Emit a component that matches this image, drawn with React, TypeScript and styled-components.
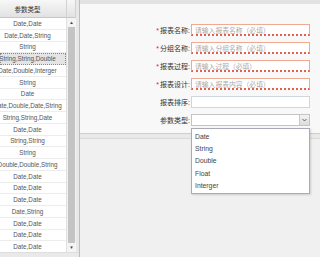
import React from 'react';
import styled, { createGlobalStyle } from 'styled-components';

const GlobalStyle = createGlobalStyle`
    html, body {
        margin: 0;
        padding: 0;
        background: #f0f0f0;
        font-family: "Liberation Sans", "Noto Sans CJK SC", sans-serif;
    }
`;

const Page = styled.div`
    display: flex;
    width: 320px;
    height: 257px;
    overflow: hidden;
    background: #f0f0f0;
`;

const Sidebar = styled.div`
    display: flex;
    flex-direction: column;
    width: 79px;
    flex: none;
    background: #fff;
    border-right: 1px solid #bdbdbd;
    box-shadow: inset -3px 0 0 #e8e8e8;
`;

const GridHeader = styled.div`
    display: flex;
    height: 18px;
    flex: none;
`;

const HeaderCell = styled.div<{ $w: number; $pad?: number }>`
    display: flex;
    align-items: center;
    justify-content: center;
    width: ${p => p.$w}px;
    padding-right: ${p => p.$pad || 0}px;
    flex: none;
    box-sizing: border-box;
    font-size: 6.5px;
    color: #333;
    background: linear-gradient(#f7f7f7, #e2e2e2);
    border-right: 1px solid #d2d2d2;
    border-bottom: 1px solid #c6c6c6;
`;

const GridBody = styled.div`
    display: flex;
    flex: 1;
    min-height: 0;
`;

const Rows = styled.div`
    width: 67px;
    flex: none;
    overflow: hidden;
    border-right: 1px solid #e0e0e0;
    box-sizing: border-box;
`;

const Row = styled.div<{ $selected?: boolean }>`
    display: flex;
    align-items: center;
    justify-content: center;
    height: 11.75px;
    padding-right: 11px;
    box-sizing: border-box;
    white-space: nowrap;
    font-size: 6.3px;
    color: #555;
    border-bottom: 1px solid #ececec;
    background: ${p => (p.$selected ? '#e4e4e4' : '#fff')};
    outline: ${p => (p.$selected ? '1px dotted #888' : 'none')};
    outline-offset: -1px;
`;

const Scrollbar = styled.div`
    display: flex;
    flex-direction: column;
    width: 9px;
    flex: none;
    background: #f2f2f2;
`;

const ScrollArrow = styled.div`
    display: flex;
    align-items: center;
    justify-content: center;
    height: 9px;
    flex: none;
    font-size: 4.5px;
    color: #444;
    background: #f4f4f4;
`;

const ScrollThumb = styled.div`
    flex: 1;
    margin: 0 1px;
    background: #c4c4c4;
`;

const HScroll = styled.div`
    height: 4px;
    flex: none;
    background: #e9e9e9;
    border-top: 1px solid #dedede;
`;

const Main = styled.div`
    display: flex;
    flex-direction: column;
    flex: 1;
    min-width: 0;
`;

const TopBar = styled.div`
    height: 4px;
    flex: none;
    background: #e2e2e2;
`;

const FormPanel = styled.div`
    display: grid;
    grid-template-columns: 1fr 119px;
    grid-auto-rows: 12px;
    row-gap: 6px;
    column-gap: 1px;
    align-items: center;
    padding: 20px 10px 0 0;
    height: 130px;
    flex: none;
    box-sizing: border-box;
    background: #f8f8f8;
    border-bottom: 1px solid #cfcfcf;
    position: relative;
    z-index: 1;
`;

const Toolbar = styled.div`
    height: 4px;
    flex: none;
    background: #e9e9e9;
    border-bottom: 1px solid #dadada;
`;

const Label = styled.label`
    text-align: right;
    font-size: 7px;
    color: #333;
    white-space: nowrap;
`;

const Star = styled.span`
    color: #e02020;
    margin-right: 1px;
`;

const Input = styled.div<{ $required?: boolean }>`
    display: flex;
    align-items: center;
    height: 12px;
    box-sizing: border-box;
    padding-left: 3px;
    font-size: 6.8px;
    color: #aaa;
    white-space: nowrap;
    overflow: hidden;
    background: #fff;
    border: 1px solid ${p => (p.$required ? '#f0aa92' : '#cfd6dc')};
    border-bottom: ${p => (p.$required ? '2px dotted #e4604a' : '1px solid #cfd6dc')};
`;

const SelectWrap = styled.div`
    position: relative;
    height: 12px;
`;

const SelectBox = styled.div`
    display: flex;
    justify-content: flex-end;
    height: 12px;
    box-sizing: border-box;
    background: #fff;
    border: 1px solid #c4c4c4;
`;

const SelectArrow = styled.div`
    display: flex;
    align-items: center;
    justify-content: center;
    width: 9px;
    background: linear-gradient(#f4f4f4, #dcdcdc);
    border-left: 1px solid #c8c8c8;
`;

const Dropdown = styled.div`
    position: absolute;
    top: 14px;
    left: 0;
    right: 0;
    z-index: 2;
    padding: 1px 0;
    background: #fff;
    border: 1px solid #a9a9b8;
    box-shadow: 1px 1px 2px rgba(0, 0, 0, .15);
`;

const Option = styled.div`
    display: flex;
    align-items: center;
    height: 12.4px;
    padding-left: 3px;
    font-size: 6.8px;
    color: #444;
`;

const types: string[] = [
    'Date,Date', 'Date,Date,String', 'String', 'String,String,Double', 'Date,Double,Interger',
    'String', 'Date', 'Date,Double,Date,String', 'String,String,Date', 'Date,Date',
    'String,String', 'String', 'Double,Double,String', 'Date,Date', 'Date,Date',
    'Date,Date', 'Date,String', 'Date,Date', 'Date,Date', 'Date,Date'
];

const fields = [
    { label: '报表名称:', placeholder: '请输入报表名称（必填）', required: true },
    { label: '分组名称:', placeholder: '请输入分组名称（必填）', required: true },
    { label: '报表过程:', placeholder: '请输入过程（必填）', required: true },
    { label: '报表设计:', placeholder: '请输入报表内容（必填）', required: true },
    { label: '报表排序:', placeholder: '', required: false }
];

const options = ['Date', 'String', 'Double', 'Float', 'Interger'];

const App: React.FC = () => (
    <Page>
        <GlobalStyle />
        <Sidebar>
            <GridHeader>
                <HeaderCell $w={67} $pad={11}>参数类型</HeaderCell>
                <HeaderCell $w={9} />
            </GridHeader>
            <GridBody>
                <Rows>
                    {types.map((t, key) => (
                        // eslint-disable-next-line react/no-array-index-key
                        <Row key={key} $selected={key === 3}>{t}</Row>
                    ))}
                </Rows>
                <Scrollbar>
                    <ScrollArrow>▲</ScrollArrow>
                    <ScrollThumb />
                    <ScrollArrow>▼</ScrollArrow>
                </Scrollbar>
            </GridBody>
            <HScroll />
        </Sidebar>
        <Main>
            <TopBar />
            <FormPanel>
                {fields.map(f => (
                    <React.Fragment key={f.label}>
                        <Label>
                            {f.required && <Star>*</Star>}
                            {f.label}
                        </Label>
                        <Input $required={f.required}>{f.placeholder}</Input>
                    </React.Fragment>
                ))}
                <Label>参数类型:</Label>
                <SelectWrap>
                    <SelectBox>
                        <SelectArrow>
                            <svg width="5" height="4" viewBox="0 0 5 4">
                                <path d="M0.5 1 L2.5 3 L4.5 1" fill="none" stroke="#555" strokeWidth="0.9" />
                            </svg>
                        </SelectArrow>
                    </SelectBox>
                    <Dropdown>
                        {options.map(o => <Option key={o}>{o}</Option>)}
                    </Dropdown>
                </SelectWrap>
            </FormPanel>
            <Toolbar />
        </Main>
    </Page>
);

export default App;
